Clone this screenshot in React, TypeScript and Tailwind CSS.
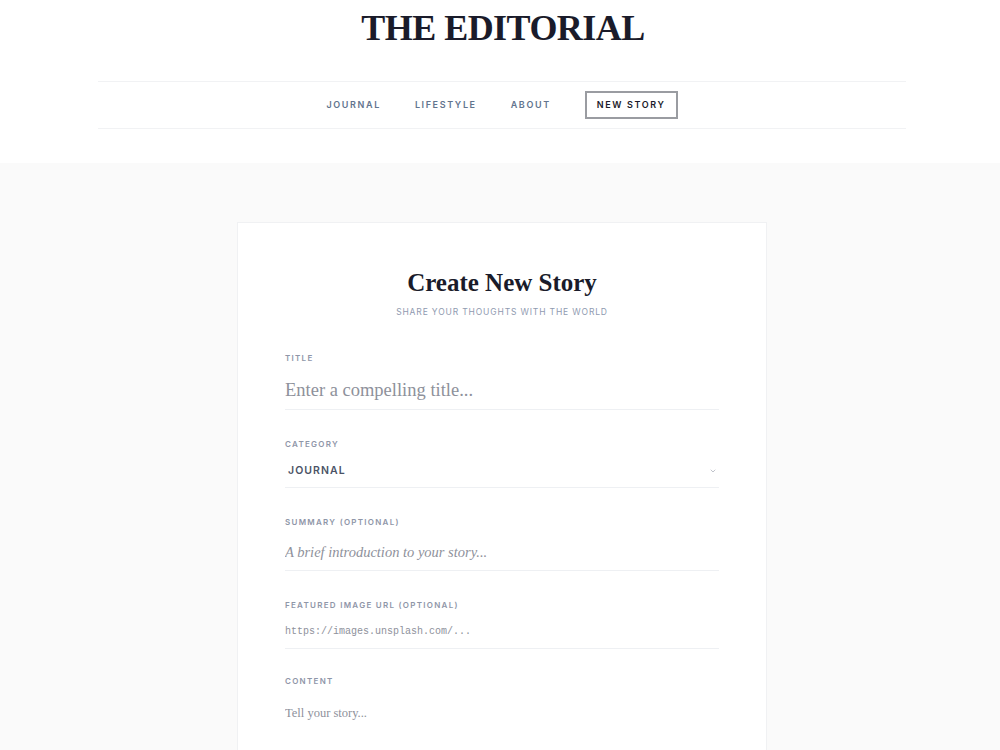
import React from 'react'

const serif = { fontFamily: '"Liberation Serif", "DejaVu Serif", serif' }

function Label({ children }: { children: React.ReactNode }) {
  return (
    <label className="block text-[8px] font-semibold uppercase leading-[12px] tracking-[0.16em] text-[#8f96a8] font-['Inter',sans-serif]">
      {children}
    </label>
  )
}

export default function App() {
  return (
    <div className="min-h-screen bg-[#fafafa] font-['Inter',sans-serif]">
      {/* Header */}
      <header className="bg-white pb-[34px]">
        <div className="pt-[8px] text-center">
          <h1
            className="translate-x-[3px] text-[36px] font-bold leading-[40px] tracking-[-0.015em] text-[#1a1b2a]"
            style={serif}
          >
            THE EDITORIAL
          </h1>
        </div>
        <div className="px-[96px] mt-[33px]">
          <nav className="flex h-[48px] translate-x-[2px] items-center justify-center gap-[34px] border-y border-[#f1f2f4] text-[9px] font-semibold uppercase tracking-[0.18em] text-slate-500">
            <a href="#">Journal</a>
            <a href="#">Lifestyle</a>
            <a href="#">About</a>
            <a
              href="#"
              className="border-2 border-[#9a9ca1] px-[10px] py-[5px] text-[#1a1b2a]"
            >
              New Story
            </a>
          </nav>
        </div>
      </header>

      {/* Form card */}
      <main className="pt-[59px]">
        <div className="mx-auto w-[530px] translate-x-[2px] border border-[#f0f1f3] bg-white px-[47px] pt-[45px] pb-10">
          <h2
            className="text-center text-[25px] font-bold leading-[30px] text-[#1a1b2a]"
            style={serif}
          >
            Create New Story
          </h2>
          <p className="mt-[8px] text-center text-[8.5px] uppercase tracking-[0.1em] text-[#8f9ab0]">
            Share your thoughts with the world
          </p>

          <div className="mt-[33px]">
            <Label>Title</Label>
            <input
              className="mt-[14px] block w-full border-b border-[#eef0f3] pb-[7px] text-[18.5px] leading-[24px] text-gray-700 outline-none placeholder:text-[#8e919b]"
              style={serif}
              placeholder="Enter a compelling title..."
            />
          </div>

          <div className="mt-[28px]">
            <Label>Category</Label>
            <div className="relative mt-[13px] flex items-center border-b border-[#eef0f3] pb-[8px] pl-[3px]">
              <span className="flex-1 text-[10.5px] font-semibold uppercase tracking-[0.1em] text-[#4b5366]">
                Journal
              </span>
              <svg
                width="8"
                height="8"
                viewBox="0 0 24 24"
                fill="none"
                stroke="#b3b7c0"
                strokeWidth="2.5"
                strokeLinecap="round"
                className="mr-[2px]"
              >
                <path d="M6 9l6 6 6-6" />
              </svg>
            </div>
          </div>

          <div className="mt-[28px]">
            <Label>Summary (Optional)</Label>
            <input
              className="mt-[14px] block w-full border-b border-[#eef0f3] pb-[8px] text-[14.5px] italic leading-[20px] outline-none placeholder:text-[#8e919b]"
              style={serif}
              placeholder="A brief introduction to your story..."
            />
          </div>

          <div className="mt-[28px]">
            <Label>Featured Image URL (Optional)</Label>
            <input
              className="mt-[13px] block w-full border-b border-[#eef0f3] pb-[8px] font-['Liberation_Mono',monospace] text-[10px] leading-[16px] outline-none placeholder:text-[#8e919b]"
              placeholder="https://images.unsplash.com/..."
            />
          </div>

          <div className="mt-[26px]">
            <Label>Content</Label>
            <textarea
              className="mt-[16px] block h-[160px] w-full resize-none text-[12.5px] leading-[20px] outline-none placeholder:text-[#8e919b]"
              style={serif}
              placeholder="Tell your story..."
            />
          </div>
        </div>
      </main>
    </div>
  )
}
